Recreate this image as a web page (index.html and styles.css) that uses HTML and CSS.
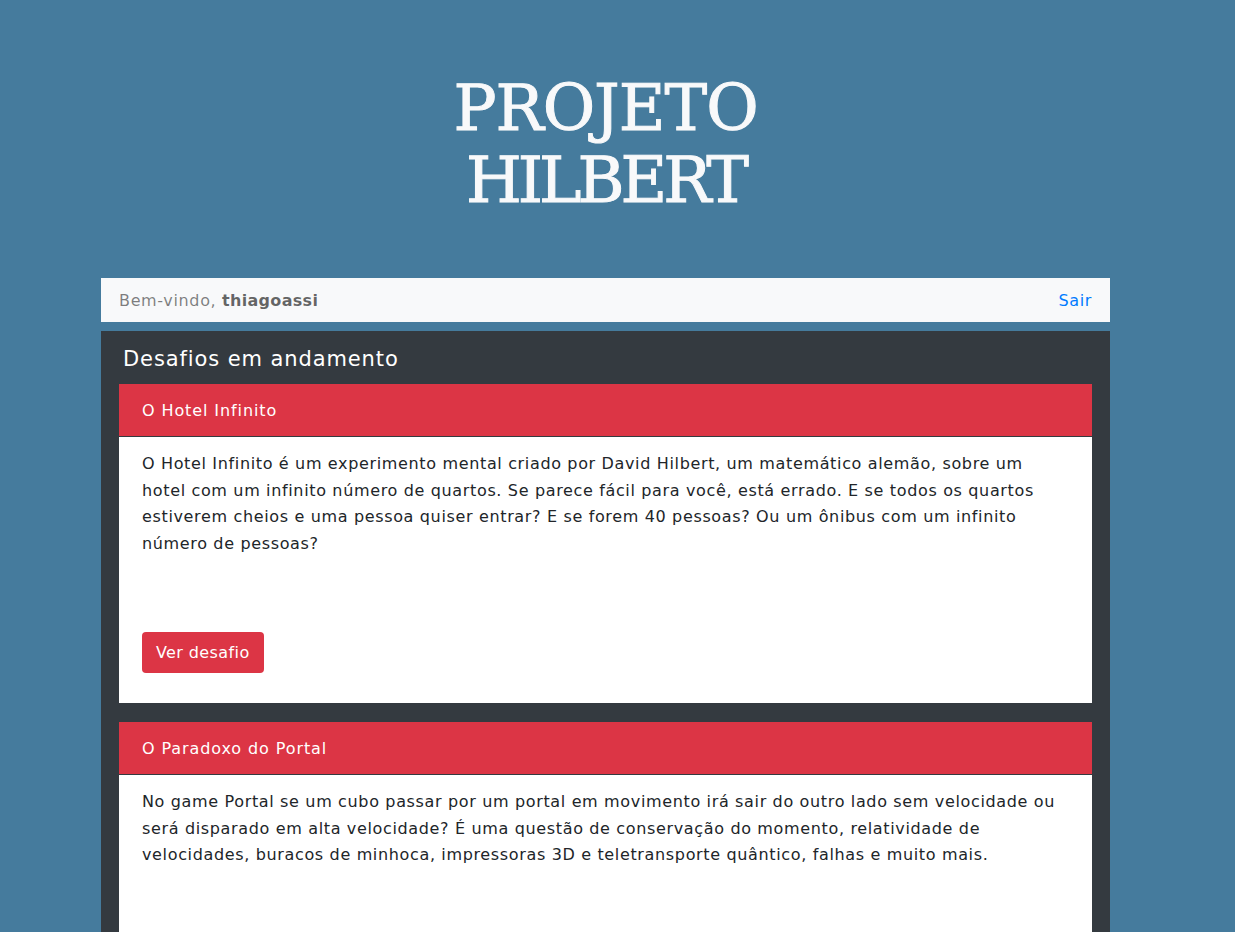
FILE: index.html
```html
<!DOCTYPE html>
<html lang="pt-BR">
<head>
<meta charset="utf-8">
<title>Projeto Hilbert</title>
<link rel="stylesheet" href="styles.css">
</head>
<body>
<div class="page">
  <header class="hero">
    <h1 class="logo">PROJETO<br><span class="logo-second">HILBERT</span></h1>
  </header>
  <nav class="userbar">
    <span class="welcome">Bem-vindo, <strong>thiagoassi</strong></span>
    <a class="logout" href="#">Sair</a>
  </nav>
  <section class="panel">
    <h2 class="panel-title">Desafios em andamento</h2>
    <article class="card">
      <div class="card-header">O Hotel Infinito</div>
      <div class="card-body">
        <p class="card-text">O Hotel Infinito é um experimento mental criado por David Hilbert, um matemático alemão, sobre um hotel com um infinito número de quartos. Se parece fácil para você, está errado. E se todos os quartos estiverem cheios e uma pessoa quiser entrar? E se forem 40 pessoas? Ou um ônibus com um infinito número de pessoas?</p>
        <a class="btn" href="#">Ver desafio</a>
      </div>
    </article>
    <article class="card">
      <div class="card-header">O Paradoxo do Portal</div>
      <div class="card-body">
        <p class="card-text">No game Portal se um cubo passar por um portal em movimento irá sair do outro lado sem velocidade ou será disparado em alta velocidade? É uma questão de conservação do momento, relatividade de velocidades, buracos de minhoca, impressoras 3D e teletransporte quântico, falhas e muito mais.</p>
        <a class="btn" href="#">Ver desafio</a>
      </div>
    </article>
  </section>
</div>
</body>
</html>
```
FILE: styles.css
```css
html, body {
  margin: 0;
  padding: 0;
  background: #457b9d;
}
body {
  font-family: "DejaVu Sans", "Noto Sans", sans-serif;
  color: #212529;
  font-size: 16px;
  letter-spacing: 0.65px;
}
.page {
  width: 1009px;
  margin-left: 101px;
}
.hero {
  height: 278px;
  display: flex;
  justify-content: center;
  align-items: flex-start;
}
.logo {
  margin: 72px 0 0;
  font-family: "DejaVu Serif", "Liberation Serif", serif;
  font-weight: normal;
  font-size: 64px;
  line-height: 72px;
  letter-spacing: -1px;
  -webkit-text-stroke: 1px #f8f9fa;
  color: #f8f9fa;
  text-align: center;
}
.logo-second {
  letter-spacing: -4px;
}
.userbar {
  height: 44px;
  background: #f8f9fa;
  display: flex;
  align-items: center;
  justify-content: space-between;
  padding: 0 18px;
  font-size: 16px;
}
.welcome {
  color: rgba(0,0,0,0.5);
}
.welcome strong {
  color: rgba(0,0,0,0.6);
  font-weight: bold;
  letter-spacing: 0.3px;
}
.logout {
  color: #007bff;
  text-decoration: none;
}
.panel {
  margin-top: 9px;
  background: #343a40;
  padding: 14px 18px 19px;
}
.panel-title {
  margin: 0 0 11px 4px;
  color: #fff;
  font-weight: normal;
  font-size: 21px;
  letter-spacing: 0.9px;
  line-height: 28px;
}
.card {
  background: #fff;
  margin-bottom: 19px;
}
.card-header {
  background: #dc3545;
  color: #fff;
  height: 53px;
  box-sizing: border-box;
  border-bottom: 1px solid #343a40;
  padding: 0 23px;
  display: flex;
  align-items: center;
  font-size: 16px;
  letter-spacing: 0.9px;
}
.card-body {
  padding: 14px 23px 30px;
  min-height: 222px;
  display: flex;
  flex-direction: column;
  align-items: flex-start;
  justify-content: space-between;
}
.card-text {
  margin: 0;
  line-height: 26.7px;
  font-size: 16px;
}
.btn {
  display: inline-block;
  background: #dc3545;
  color: #fff;
  text-decoration: none;
  border-radius: 4px;
  padding: 0 14px;
  height: 41px;
  line-height: 41px;
  font-size: 16px;
  letter-spacing: 0.4px;
}
```
